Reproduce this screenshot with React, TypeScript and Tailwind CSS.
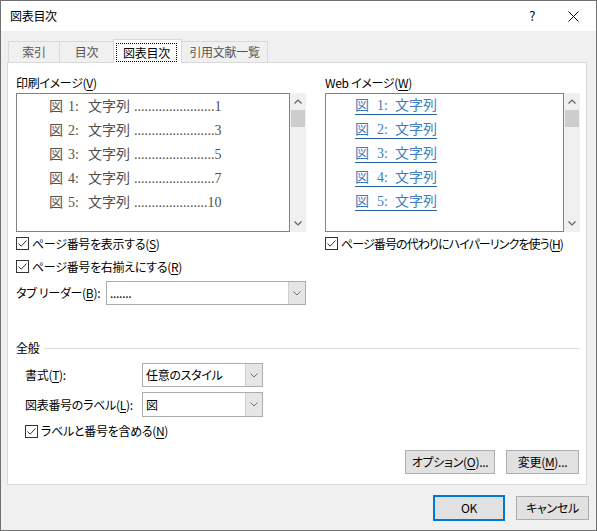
import React from "react";

const ui = "font-['Noto_Sans_CJK_JP',sans-serif] [font-feature-settings:'palt'] text-[12px] tracking-[-0.3px] text-black";
const serif = "font-['Liberation_Serif','Noto_Sans_CJK_JP',serif] text-[14px] tracking-normal";

const printRows = [
  { n: "1", p: "1", d: "......................." },
  { n: "2", p: "3", d: "......................." },
  { n: "3", p: "5", d: "......................." },
  { n: "4", p: "7", d: "......................." },
  { n: "5", p: "10", d: "....................." },
];

function Chevron({ up = false }: { up?: boolean }) {
  return (
    <svg width="8" height="5" viewBox="0 0 8 5">
      <path
        d={up ? "M0.5 4.5 L4 1 L7.5 4.5" : "M0.5 0.5 L4 4 L7.5 0.5"}
        fill="none"
        stroke="#606060"
        strokeWidth="1.2"
      />
    </svg>
  );
}

function ScrollBar() {
  return (
    <div className="w-[16px] bg-[#f0f0f0] flex flex-col">
      <div className="h-[17px] flex items-center justify-center">
        <Chevron up />
      </div>
      <div className="h-[17px] mx-[1px] bg-[#cdcdcd]" />
      <div className="flex-1" />
      <div className="h-[17px] flex items-center justify-center">
        <Chevron />
      </div>
    </div>
  );
}

function Check({ children, className = "" }: { children: React.ReactNode; className?: string }) {
  return (
    <div className="flex items-center gap-[3px] whitespace-nowrap">
      <span className="w-[13px] h-[13px] shrink-0 border border-[#333] bg-white flex items-center justify-center">
        <svg width="11" height="11" viewBox="0 0 11 11">
          <path d="M1.5 5.5 L4.2 8.2 L9.5 2.5" fill="none" stroke="#333" strokeWidth="1" />
        </svg>
      </span>
      <span className={className}>{children}</span>
    </div>
  );
}

function Select({ value, className }: { value: string; className: string }) {
  return (
    <div className={`flex border border-[#acacac] bg-white ${className}`}>
      <div className="flex-1 flex items-center pl-[3px]">{value}</div>
      <div className="w-[17px] bg-[#e5e5e5] border-l border-[#cfcfcf] flex items-center justify-center">
        <svg width="8" height="5" viewBox="0 0 8 5">
          <path d="M0.5 0.5 L4 4 L7.5 0.5" fill="none" stroke="#707070" strokeWidth="1" />
        </svg>
      </div>
    </div>
  );
}

function Button({ children, className = "" }: { children: React.ReactNode; className?: string }) {
  return (
    <div
      className={`flex items-center justify-center bg-[#e1e1e1] border border-[#adadad] ${className}`}
    >
      {children}
    </div>
  );
}

function U({ children }: { children: React.ReactNode }) {
  return <span className="underline underline-offset-2">{children}</span>;
}

export default function App() {
  return (
    <div className={`w-[597px] h-[531px] border border-[#707070] bg-[#f0f0f0] flex flex-col ${ui}`}>
      {/* Title bar */}
      <div className="h-[30px] bg-white flex items-center pl-[9px] pr-[17px]">
        <span className="flex-1 text-[12px]">図表目次</span>
        <span className="text-[13px] mr-[33px]">?</span>
        <svg width="11" height="11" viewBox="0 0 11 11">
          <path d="M0.5 0.5 L10.5 10.5 M10.5 0.5 L0.5 10.5" stroke="#000" strokeWidth="1" />
        </svg>
      </div>

      {/* Tabs */}
      <div className="mt-[8px] ml-[7px] h-[23px] flex items-end">
        <div className="w-[52px] h-[21px] border-t border-l border-r border-[#d9d9d9] flex items-center justify-center text-[#555]">
          索引
        </div>
        <div className="w-[54px] h-[21px] border-t border-r border-[#d9d9d9] flex items-center justify-center text-[#555]">
          目次
        </div>
        <div className="relative z-10 -ml-[1px] mb-[-1px] w-[69px] h-[24px] bg-white border-t border-l border-r border-[#d9d9d9] flex items-start pt-[3px] pl-[2px]">
          <span className="w-[61px] h-[19px] border border-dotted border-black flex items-center justify-center">
            図表目次
          </span>
        </div>
        <div className="w-[86px] h-[21px] border-t border-r border-[#d9d9d9] flex items-center justify-center text-[#555]">
          引用文献一覧
        </div>
      </div>

      {/* Panel */}
      <div className="ml-[6px] w-[580px] h-[423px] bg-white border border-[#d9d9d9] pl-[8px] pr-[6px] flex flex-col">
        <div className="mt-[10px] h-[262px] flex">
          {/* Print preview */}
          <div className="w-[290px] flex flex-col">
            <div className="h-[20px] flex items-center">
              印刷イメージ(<U>V</U>)
            </div>
            <div className="h-[139px] flex">
              <div className="w-[274px] border border-[#828282] bg-white">
                {printRows.map((r) => (
                  <div key={r.n} className={`h-[24px] pl-[32px] flex items-center text-[#505050] ${serif}`}>
                    <div className="flex items-center whitespace-nowrap">
                      <span className="w-[19px]">図</span>
                      <span className="w-[20px]">{r.n}:</span>
                      <span>文字列</span>
                      <span className="ml-[4px]">{r.d}</span>
                      <span>{r.p}</span>
                    </div>
                  </div>
                ))}
              </div>
              <ScrollBar />
            </div>
            <div className="h-[23px] flex items-center">
              <Check>
                ページ番号を表示する(<U>S</U>)
              </Check>
            </div>
            <div className="h-[23px] flex items-center">
              <Check>
                ページ番号を右揃えにする(<U>R</U>)
              </Check>
            </div>
            <div className="mt-[3px] flex items-center">
              <span className="w-[90px]">
                タブ リーダー(<U>B</U>):
              </span>
              <Select value="......." className="w-[200px] h-[24px]" />
            </div>
          </div>

          <div className="ml-[9px] w-px bg-[#b4b4b4]" />

          {/* Web preview */}
          <div className="ml-[10px] w-[255px] flex flex-col">
            <div className="h-[20px] flex items-center">
              Web イメージ(<U>W</U>)
            </div>
            <div className="h-[139px] flex">
              <div className="w-[239px] border border-[#828282] bg-white">
                {printRows.map((r) => (
                  <div key={r.n} className={`h-[24px] pl-[29px] flex items-center text-[#3c7dc0] ${serif}`}>
                    <div className="flex items-center leading-[16px] h-[18px] border-b border-[#24609e] whitespace-nowrap">
                      <span className="w-[22px]">図</span>
                      <span className="w-[18px]">{r.n}:</span>
                      <span>文字列</span>
                    </div>
                  </div>
                ))}
              </div>
              <ScrollBar />
            </div>
            <div className="h-[23px] flex items-center">
              <Check className="tracking-[-0.9px]">
                ページ番号の代わりにハイパーリンクを使う(<U>H</U>)
              </Check>
            </div>
          </div>
        </div>

        {/* General */}
        <div className="h-[26px] flex items-center">
          <span>全般</span>
          <div className="ml-[5px] flex-1 h-px bg-[#dcdcdc]" />
        </div>
        <div className="mt-[2px] pl-[9px] flex items-center">
          <span className="w-[117px]">
            書式(<U>T</U>):
          </span>
          <Select value="任意のスタイル" className="w-[121px] h-[24px]" />
        </div>
        <div className="mt-[5px] pl-[9px] flex items-center">
          <span className="w-[117px]">
            図表番号のラベル(<U>L</U>):
          </span>
          <Select value="図" className="w-[121px] h-[25px]" />
        </div>
        <div className="mt-[5px] pl-[9px] h-[18px] flex items-center">
          <Check>
            ラベルと番号を含める(<U>N</U>)
          </Check>
        </div>
        <div className="mt-[10px] pr-[1px] flex justify-end gap-[11px]">
          <Button className="w-[90px] h-[24px]">
            オプション(<U>O</U>)...
          </Button>
          <Button className="w-[73px] h-[24px]">
            変更(<U>M</U>)...
          </Button>
        </div>
      </div>

      {/* Footer */}
      <div className="mt-[10px] pr-[7px] flex justify-end items-center gap-[11px]">
        <div className="w-[72px] h-[26px] bg-[#e1e1e1] border-2 border-[#0078d7] flex items-center justify-center">
          OK
        </div>
        <Button className="w-[73px] h-[24px]">キャンセル</Button>
      </div>
    </div>
  );
}
